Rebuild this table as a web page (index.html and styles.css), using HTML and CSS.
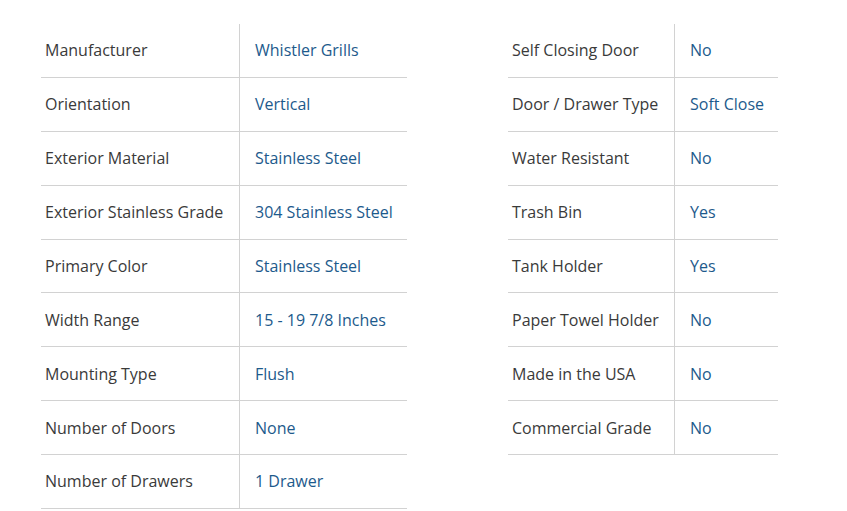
FILE: index.html
```html
<!DOCTYPE html>
<html>
<head>
<meta charset="utf-8">
<link rel="stylesheet" href="styles.css">
</head>
<body>
<div class="specs">
  <table class="spec-table left">
    <tr><td class="label">Manufacturer</td><td class="value">Whistler Grills</td></tr>
    <tr><td class="label">Orientation</td><td class="value">Vertical</td></tr>
    <tr><td class="label">Exterior Material</td><td class="value">Stainless Steel</td></tr>
    <tr><td class="label">Exterior Stainless Grade</td><td class="value">304 Stainless Steel</td></tr>
    <tr><td class="label">Primary Color</td><td class="value">Stainless Steel</td></tr>
    <tr><td class="label">Width Range</td><td class="value">15 - 19 7/8 Inches</td></tr>
    <tr><td class="label">Mounting Type</td><td class="value">Flush</td></tr>
    <tr><td class="label">Number of Doors</td><td class="value">None</td></tr>
    <tr><td class="label">Number of Drawers</td><td class="value">1 Drawer</td></tr>
  </table>
  <table class="spec-table right">
    <tr><td class="label">Self Closing Door</td><td class="value">No</td></tr>
    <tr><td class="label">Door / Drawer Type</td><td class="value">Soft Close</td></tr>
    <tr><td class="label">Water Resistant</td><td class="value">No</td></tr>
    <tr><td class="label">Trash Bin</td><td class="value">Yes</td></tr>
    <tr><td class="label">Tank Holder</td><td class="value">Yes</td></tr>
    <tr><td class="label">Paper Towel Holder</td><td class="value">No</td></tr>
    <tr><td class="label">Made in the USA</td><td class="value">No</td></tr>
    <tr><td class="label">Commercial Grade</td><td class="value">No</td></tr>
  </table>
</div>
</body>
</html>
```
FILE: styles.css
```css
html, body {
  margin: 0;
  padding: 0;
  background: #fff;
}
body {
  font-family: "Open Sans", "Liberation Sans", sans-serif;
  font-size: 16px;
  color: #3a3a3a;
}
.specs {
  display: flex;
  align-items: flex-start;
  gap: 101px;
  padding: 24px 0 0 41px;
}
.spec-table {
  border-collapse: collapse;
  table-layout: fixed;
}
.spec-table.left { width: 366px; }
.spec-table.right { width: 270px; }
.spec-table td {
  height: 52.875px;
  padding: 0;
  border-bottom: 1px solid #d2d2d2;
  vertical-align: middle;
  white-space: nowrap;
}
.spec-table .label {
  padding-left: 4px;
  border-right: 1px solid #d2d2d2;
}
.spec-table .value {
  padding-left: 15px;
  color: #1d5a8c;
}
.left .label { width: 194px; }
.right .label { width: 162px; }
```
